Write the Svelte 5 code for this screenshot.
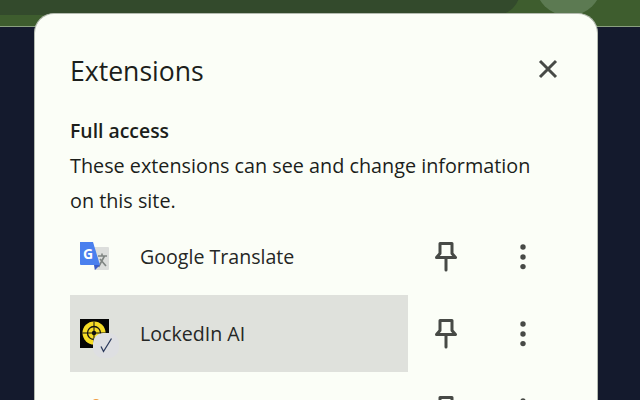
<script>
	const extensions = [
		{ name: 'Google Translate', icon: 'translate' },
		{ name: 'LockedIn AI', icon: 'lockedin', active: true },
		{ name: '', icon: 'other' }
	];
</script>

<div class="page">
	<header class="browser-bar">
		<div class="tab"></div>
		<div class="avatar"></div>
	</header>

	<main class="content">
		<section class="popup">
			<div class="title-row">
				<h1>Extensions</h1>
				<svg class="close" width="24" height="24" viewBox="0 0 24 24">
					<path d="M4 4 20 20M20 4 4 20" />
				</svg>
			</div>

			<h2>Full access</h2>
			<p>These extensions can see and change information on this site.</p>

			<ul>
				{#each extensions as ext}
					<li>
						<div class="ext" class:active={ext.active}>
							<span class="icon">
								{#if ext.icon === 'translate'}
									<svg width="30" height="30" viewBox="0 0 30 30">
										<path d="M14 5h14a1 1 0 0 1 1 1v21a1 1 0 0 1-1 1H14z" fill="#dcdedc" />
										<path d="M18 14h9M22 11.5v2.5M18.5 25l6-11M20 17l6 7" class="glyph" />
										<path d="M0 0h13l7 23H1a1 1 0 0 1-1-1z" fill="#4a80ee" />
										<path d="M14 23h6l-5 5z" fill="#3a5cc8" />
										<text x="8" y="17" class="g">G</text>
									</svg>
								{:else if ext.icon === 'lockedin'}
									<svg width="29" height="29" viewBox="0 0 29 29">
										<rect width="29" height="29" fill="#050505" />
										<circle cx="14" cy="14" r="11.5" fill="#f5dc26" />
										<circle cx="14" cy="14" r="6.5" fill="none" stroke="#111" stroke-width="1.3" />
										<circle cx="14" cy="14" r="2.2" fill="#111" />
										<path d="M14 2.5v23M2.500 14h23" stroke="#111" stroke-width="1" />
									</svg>
									<span class="badge">
										<svg width="14" height="16" viewBox="0 0 14 16">
											<path d="M2 9.5 4.5 14.500 12.500 1.500" />
										</svg>
									</span>
								{:else}
									<svg width="30" height="30" viewBox="0 0 30 30">
										<circle cx="16" cy="8" r="5" fill="#ef9a3c" />
									</svg>
								{/if}
							</span>
							<span class="name">{ext.name}</span>
						</div>
						<svg class="pin" width="24" height="30" viewBox="0 0 24 30">
							<path d="M6 1.5h12v10l3.5 4h-19l3.5-4zM12 15.500V28" />
						</svg>
						<svg class="more" width="8" height="30" viewBox="0 0 8 30">
							<circle cx="4" cy="5" r="2.7" />
							<circle cx="4" cy="15" r="2.7" />
							<circle cx="4" cy="24.6" r="2.7" />
						</svg>
					</li>
				{/each}
			</ul>
		</section>
	</main>
</div>

<style>
	:global(body) {
		margin: 0;
		overflow: hidden;
	}

	.page {
		width: 640px;
		height: 400px;
		overflow: hidden;
		background: #141a2d;
		font-family: 'Open Sans', 'Noto Sans', sans-serif;
		display: flex;
		flex-direction: column;
	}

	.browser-bar {
		height: 27px;
		flex: none;
		box-sizing: border-box;
		background: #3e5d2e;
		border-bottom: 1px solid #8aa080;
		display: flex;
		justify-content: space-between;
		padding-right: 38px;
		overflow: hidden;
	}

	.tab {
		width: 520px;
		height: 45px;
		margin-top: -30px;
		background: #334a2c;
		border-radius: 0 0 24px 0;
	}

	.avatar {
		width: 67px;
		height: 67px;
		margin-top: -51px;
		border-radius: 50%;
		background: #5c7a52;
	}

	.content {
		flex: 1;
		min-height: 0;
		padding: 0 42px 0 34px;
	}

	.popup {
		margin-top: -14px;
		height: 420px;
		box-sizing: border-box;
		background: #fbfef7;
		border: 1px solid #b4bbb0;
		border-bottom: none;
		border-radius: 20px 20px 0 0;
		padding: 40px 0 0 35px;
		color: #1c1e1b;
	}

	.title-row {
		display: flex;
		align-items: center;
		justify-content: space-between;
		padding-right: 37px;
		height: 34px;
	}

	h1 {
		margin: 0;
		font-size: 26.6px;
		font-weight: 500;
		line-height: 34px;
	}

	.close {
		margin-top: -4px;
	}

	.close path {
		fill: none;
		stroke: #474a46;
		stroke-width: 3;
	}

	h2 {
		margin: 30px 0 0;
		font-size: 19.4px;
		font-weight: 600;
		line-height: 26px;
	}

	p {
		margin: 4px 0 0;
		width: 480px;
		font-size: 19.8px;
		line-height: 35px;
	}

	ul {
		list-style: none;
		margin: 0;
		padding: 0;
	}

	li {
		display: flex;
		align-items: center;
		height: 77px;
	}

	.ext {
		width: 338px;
		height: 77px;
		display: flex;
		align-items: center;
		gap: 30px;
		padding-left: 10px;
		box-sizing: border-box;
	}

	.ext.active {
		background: #dfe1dc;
	}

	.icon {
		position: relative;
		width: 30px;
		height: 30px;
		flex: none;
	}

	.icon > svg {
		display: block;
	}

	.glyph {
		fill: none;
		stroke: #7f8582;
		stroke-width: 1.6;
	}

	.g {
		font-family: 'Open Sans', sans-serif;
		font-size: 14px;
		font-weight: 700;
		fill: #fff;
		text-anchor: middle;
	}

	.badge {
		position: absolute;
		left: 13px;
		top: 14px;
		width: 26px;
		height: 25px;
		background: #dedfe2;
		border-radius: 10px;
		display: flex;
		align-items: center;
		justify-content: center;
	}

	.badge path {
		fill: none;
		stroke: #2c3a5c;
		stroke-width: 1.3;
	}

	.name {
		font-size: 19.6px;
		color: #252725;
	}

	.pin {
		margin-left: 26px;
		flex: none;
	}

	.pin path {
		fill: none;
		stroke: #474a46;
		stroke-width: 3;
		stroke-linejoin: round;
		stroke-linecap: round;
	}

	.more {
		margin-left: 61px;
		flex: none;
		fill: #474a46;
	}
</style>
